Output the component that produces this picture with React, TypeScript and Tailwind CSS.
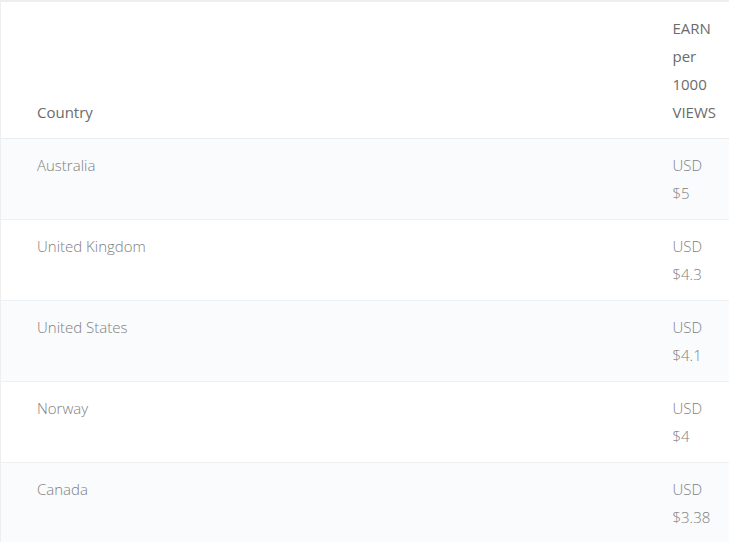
const rows = [
  { country: "Australia", earn: "$5" },
  { country: "United Kingdom", earn: "$4.3" },
  { country: "United States", earn: "$4.1" },
  { country: "Norway", earn: "$4" },
  { country: "Canada", earn: "$3.38" },
]

export default function App() {
  return (
    <div className="w-[729px] h-[542px] overflow-hidden bg-white font-['Open_Sans',sans-serif] text-[15px] leading-[28px]">
      <table className="w-full border-collapse border-t-2 border-l border-[#eeeeee]">
        <thead>
          <tr className="border-b border-[#e9edf0]">
            <th className="text-left align-bottom font-normal text-[#6b6b6b] pl-[36px] pr-3 pt-3 pb-3">Country</th>
            <th className="text-left align-bottom font-normal text-[#6b6b6b] w-px pl-3 pr-[13px] pt-3 pb-3">
              EARN per 1000 VIEWS
            </th>
          </tr>
        </thead>
        <tbody>
          {rows.map((r, i) => (
            <tr key={r.country} className={`border-b border-[#eef1f3] ${i % 2 === 0 ? "bg-[#f9fbfd]" : "bg-white"}`}>
              <td className="align-top font-light text-[#808080] pl-[36px] pr-3 pt-3 pb-3">{r.country}</td>
              <td className="align-top font-light text-[#808080] pl-3 pr-[13px] pt-3 pb-3">
                USD {r.earn}
              </td>
            </tr>
          ))}
        </tbody>
      </table>
    </div>
  )
}
